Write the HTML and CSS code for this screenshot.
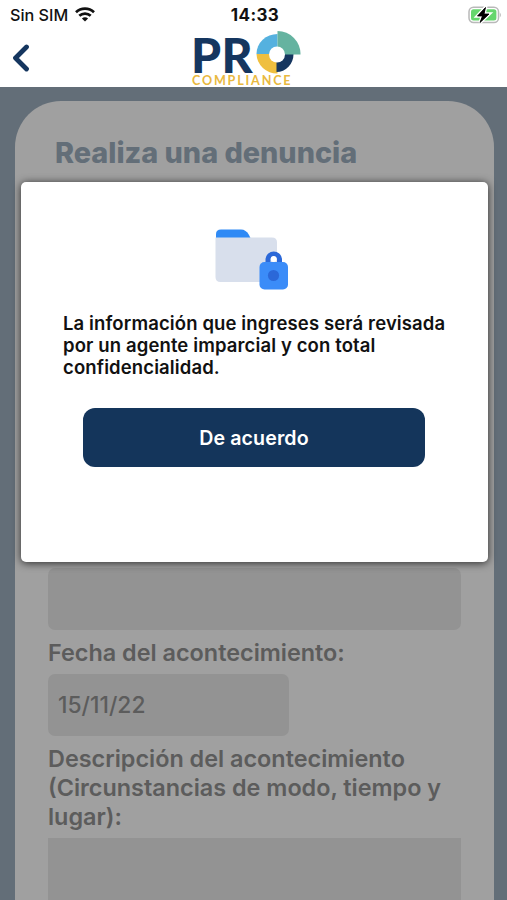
FILE: index.html
```html
<!DOCTYPE html>
<html lang="es">
    <head>
        <meta charset="UTF-8">
        <meta name="viewport" content="width=device-width, initial-scale=1">
        <title>Realiza una denuncia - PRO Compliance</title>
        <link rel="stylesheet" href="styles.css">
    </head>
    <body>
        <header class="header">
            <div class="status-bar">
                <div class="carrier">
                    <span>Sin SIM</span>
                    <svg class="wifi" viewBox="0 0 20 15" width="20" height="15" fill="none" stroke="#111" stroke-width="2.7">
                        <path d="M1 5.2C6 .4 14 .4 19 5.2"/>
                        <path d="M4.3 8.8C7.5 5.8 12.5 5.8 15.7 8.8"/>
                        <path d="M10 14.5L6.9 11.5C8.6 9.9 11.4 9.9 13.1 11.5Z" fill="#111" stroke="none"/>
                    </svg>
                </div>
                <span class="clock">14:33</span>
                <svg class="battery" viewBox="0 0 34 18" width="34" height="18">
                    <rect x="1" y="1.2" width="29.5" height="15.4" rx="4.5" fill="#fff" stroke="#b9b9b9" stroke-width="1.5"/>
                    <path d="M31.8 6.5Q34 9 31.8 11.5Z" fill="#b9b9b9"/>
                    <rect x="3" y="3.3" width="25.4" height="11.2" rx="2.5" fill="#65d66d"/>
                    <path d="M17.500 1.500L9.500 10H14.500L12 16.500L21 8H16Z" fill="#000" stroke="#fff" stroke-width="3.400" paint-order="stroke"/>
                    <path d="M17.500 1.500L9.500 10H14.500L12 16.500L21 8H16Z" fill="#000" stroke="#000" stroke-width=".8"/>
                </svg>
            </div>
            <div class="nav-bar">
                <svg class="back" viewBox="0 0 18 28" width="18" height="28" fill="none" stroke="#15365f" stroke-width="4.8" stroke-linecap="round" stroke-linejoin="round">
                    <path d="M14.5 3L3.5 14L14.5 25"/>
                </svg>
                <div class="logo">
                    <div class="logo-top">
                        <span class="logo-text">PR</span>
                        <svg class="logo-ring" viewBox="0 0 45 44" width="45" height="44">
                            <path d="M.5 23A21 20 0 0 1 21.500 3V23Z" fill="#55b1df"/>
                            <path d="M.5 23H21.500V42.500A20.500 20 0 0 1 .5 23Z" fill="#efbf3f"/>
                            <path d="M20.500 23H37.500A17 18 0 0 1 20.500 41Z" fill="#15365f"/>
                            <path d="M21.500 0A23 23 0 0 1 44.500 23.500H21.500Z" fill="#65b3a0"/>
                            <circle cx="21" cy="23.500" r="8" fill="#fff"/>
                        </svg>
                    </div>
                    <span class="logo-sub">COMPLIANCE</span>
                </div>
            </div>
        </header>

        <main class="content">
            <div class="card">
                <h1 class="title">Realiza una denuncia</h1>
                <div class="field field-first"></div>
                <p class="label">Fecha del acontecimiento:</p>
                <div class="field field-date">15/11/22</div>
                <p class="label">Descripción del acontecimiento (Circunstancias de modo, tiempo y lugar):</p>
                <div class="field field-text"></div>
            </div>
        </main>

        <div class="modal">
            <svg class="folder" viewBox="0 0 74 62" width="74" height="62">
                <path d="M1 12V5Q1 .5 6 .5H26Q31 .5 34 6L37 12Z" fill="#2f8af5"/>
                <path d="M.5 8.5H57Q62 8.5 62 13.5V48Q62 53 57 53H5.500Q.5 53 .5 48Z" fill="#d8dfec"/>
                <path d="M53 35V30A5.800 5.800 0 0 1 64.500 30V35" fill="none" stroke="#2b68d8" stroke-width="5"/>
                <circle cx="58.700" cy="30" r="2.900" fill="#fff"/>
                <rect x="44.500" y="33" width="28.500" height="27.500" rx="5" fill="#3b8cf8"/>
                <circle cx="58.500" cy="46.500" r="5.600" fill="#2b68d8"/>
            </svg>
            <p class="modal-text">La información que ingreses será revisada por un agente imparcial y con total confidencialidad.</p>
            <button type="button" class="modal-button">De acuerdo</button>
        </div>
    </body>
</html>
```

FILE: styles.css
```css
* {
    box-sizing: border-box;
}
body {
    margin: 0;
    height: 900px;
    position: relative;
    display: flex;
    flex-direction: column;
    overflow: hidden;
    font-family: Inter, "Liberation Sans", sans-serif;
    background: #636e78;
}
.header {
    height: 87px;
    flex: none;
    background: #fff;
}
.status-bar {
    display: grid;
    grid-template-columns: 1fr auto 1fr;
    align-items: center;
    height: 29px;
    padding: 0 5px 0 10px;
    color: #111;
}
.carrier {
    display: flex;
    align-items: center;
    gap: 7px;
    font-size: 16.2px;
    font-weight: 500;
}
.clock {
    margin-right: 2px;
    font-size: 17px;
    font-weight: 700;
    letter-spacing: 0.4px;
}
.battery {
    justify-self: end;
}
.nav-bar {
    display: grid;
    grid-template-columns: 192px 1fr;
    height: 58px;
}
.back {
    margin: 15px 0 0 12px;
}
.logo {
    display: flex;
    flex-direction: column;
    padding-top: 2px;
}
.logo-top {
    display: flex;
    height: 44px;
}
.logo-text {
    width: 64px;
    height: 44px;
    margin-left: -1px;
    margin-right: 1px;
    font-family: Lato, sans-serif;
    font-size: 48px;
    font-weight: 900;
    line-height: 48px;
    letter-spacing: 0.5px;
    color: #15365f;
}
.logo-sub {
    font-family: Lato, sans-serif;
    font-size: 12.6px;
    font-weight: 700;
    line-height: 12px;
    letter-spacing: 1.8px;
    color: #e9b93f;
}
.content {
    flex: 1;
    min-height: 0;
    display: flex;
    padding: 14px 13px 0 15px;
}
.card {
    flex: 1;
    display: flex;
    flex-direction: column;
    padding: 34px 33px 0;
    border-radius: 46px 46px 0 0;
    background: #a0a0a0;
}
.title {
    margin: 0 0 0 7px;
    font-size: 28.8px;
    font-weight: 800;
    line-height: 36px;
    color: #636e78;
}
.field {
    flex: none;
    width: 413px;
    height: 62px;
    border-radius: 7px;
    background: #939393;
}
.field-first {
    margin-top: 397px;
}
.field-date {
    width: 241px;
    padding-left: 10px;
    font-size: 22.8px;
    font-weight: 500;
    line-height: 62px;
    color: #5c5c5c;
}
.field-text {
    flex: 1;
    border-radius: 0;
}
.label {
    margin: 8px -10px 7px 0;
    font-size: 23.4px;
    font-weight: 600;
    line-height: 29px;
    color: #5c5c5c;
}
/* aviso de confidencialidad */
.modal {
    position: absolute;
    top: 182px;
    left: 21px;
    width: 467px;
    height: 380px;
    display: flex;
    flex-direction: column;
    padding: 47px 42px 0;
    border-radius: 5px;
    background: #fff;
    box-shadow: 0 1px 9px rgba(0, 0, 0, 0.75);
}
.folder {
    margin-left: 152px;
}
.modal-text {
    margin: 21px -10px 0 0;
    font-size: 18.5px;
    font-weight: 600;
    line-height: 22px;
    letter-spacing: 0.12px;
    color: #111;
}
.modal-button {
    width: 342px;
    height: 59px;
    margin: 30px 0 0 20px;
    padding-top: 2px;
    border: none;
    border-radius: 12px;
    background: #14355b;
    color: #fff;
    font-family: inherit;
    font-size: 19.6px;
    font-weight: 600;
    letter-spacing: 0.1px;
}
```
